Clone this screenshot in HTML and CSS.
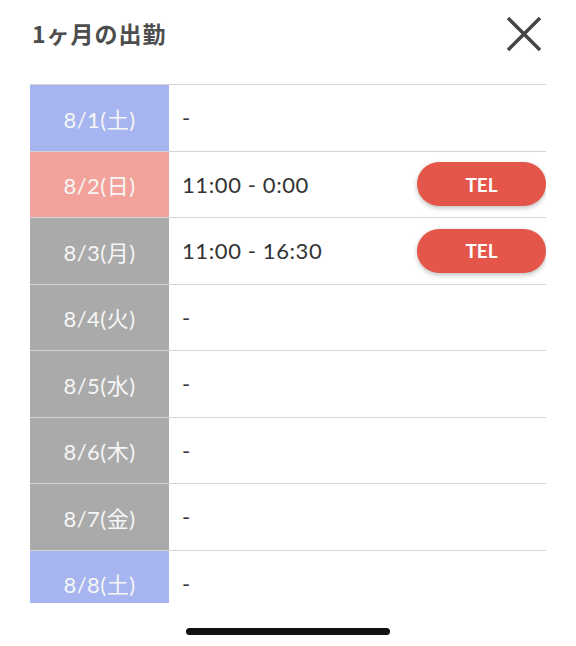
FILE: index.html
```html
<!DOCTYPE html>
<html lang="ja">
  <head>
    <meta charset="UTF-8" />
    <meta name="viewport" content="width=device-width, initial-scale=1.0" />
    <title>1ヶ月の出勤</title>
    <link rel="stylesheet" href="styles.css">
  </head>
  <body>
    <div class="header">
      <h1 class="title">1ヶ月の出勤</h1>
      <button class="close" aria-label="閉じる">
        <svg width="36" height="36" viewBox="0 0 36 36">
          <path d="M2 2 L34 34 M34 2 L2 34" stroke="#444" stroke-width="3.4" fill="none" />
        </svg>
      </button>
    </div>

    <!-- 出勤スケジュール -->
    <div class="schedule">
      <div class="row">
        <div class="date sat">8/1(土)</div>
        <div class="time">-</div>
      </div>
      <div class="row">
        <div class="date sun">8/2(日)</div>
        <div class="time">11:00 - 0:00</div>
        <button class="tel">TEL</button>
      </div>
      <div class="row">
        <div class="date">8/3(月)</div>
        <div class="time">11:00 - 16:30</div>
        <button class="tel">TEL</button>
      </div>
      <div class="row">
        <div class="date">8/4(火)</div>
        <div class="time">-</div>
      </div>
      <div class="row">
        <div class="date">8/5(水)</div>
        <div class="time">-</div>
      </div>
      <div class="row">
        <div class="date">8/6(木)</div>
        <div class="time">-</div>
      </div>
      <div class="row">
        <div class="date">8/7(金)</div>
        <div class="time">-</div>
      </div>
      <div class="row">
        <div class="date sat">8/8(土)</div>
        <div class="time">-</div>
      </div>
    </div>

    <div class="home-bar"></div>
  </body>
</html>
```

FILE: styles.css
```css
body {
  margin: 0;
  padding: 0 30px;
  font-family: Lato, "Noto Sans CJK JP", sans-serif;
  background: #fff;
  color: #333;
}

.header {
  height: 84px;
  display: flex;
  justify-content: space-between;
  align-items: flex-start;
}

.title {
  margin: 16px 0 0 2px;
  font-size: 23px;
  font-weight: bold;
  color: #4d4d4d;
  font-family: "Noto Sans CJK JP", sans-serif;
  letter-spacing: 1px;
}

.close {
  margin: 16px 4px 0 0;
  padding: 0;
  border: none;
  background: none;
  width: 36px;
  height: 36px;
}

/* スクロール領域 */
.schedule {
  height: 519px;
  overflow: hidden;
}

.row {
  display: flex;
  align-items: center;
  height: 65.5px;
  border-top: 1px solid #d4d4d4;
}

.date {
  width: 139px;
  height: 100%;
  display: flex;
  align-items: center;
  justify-content: center;
  background: #aaaaaa;
  color: #f6f6f6;
  font-size: 22px;
  letter-spacing: 0.5px;
}

.date.sat {
  background: #a6b5ef;
}

.date.sun {
  background: #f2a29a;
}

.time {
  flex: 1;
  padding-left: 13px;
  font-size: 22px;
  letter-spacing: 0.6px;
  color: #333;
}

.tel {
  width: 129px;
  height: 44px;
  border: none;
  border-radius: 22px;
  background: #e5564a;
  color: #fff;
  font-family: Lato, sans-serif;
  font-weight: bold;
  font-size: 19px;
  box-shadow: 0 2px 5px rgba(0, 0, 0, 0.25);
}

.home-bar {
  width: 204px;
  height: 7px;
  margin: 25px auto 0;
  border-radius: 4px;
  background: #111;
}
```
